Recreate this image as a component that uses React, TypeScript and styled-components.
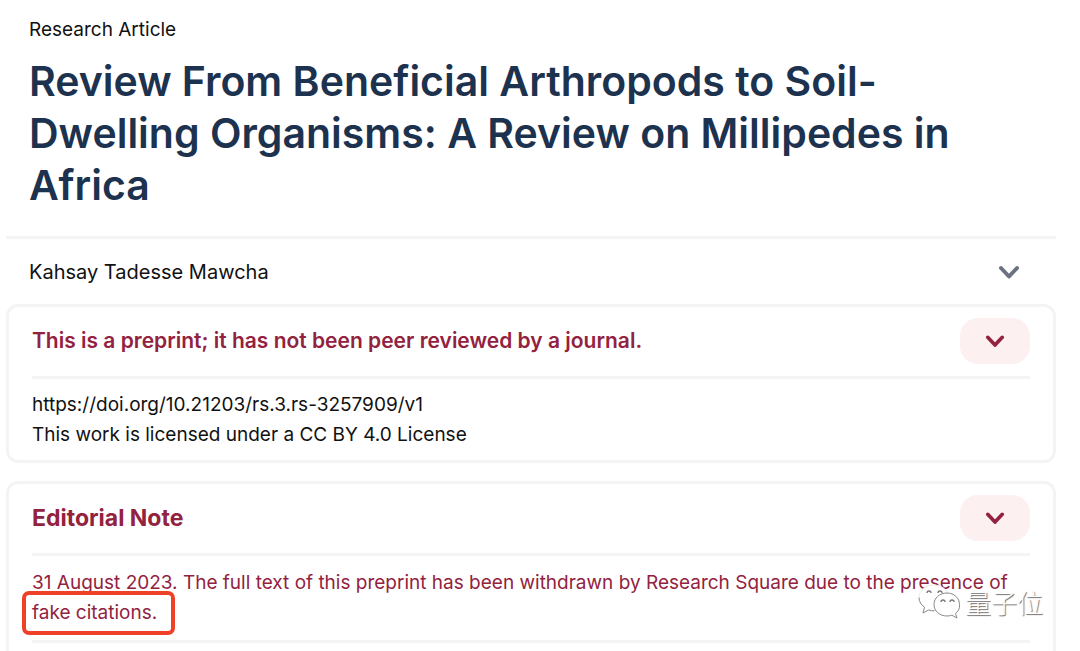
import React from "react";
import styled, { createGlobalStyle } from "styled-components";

const GlobalStyle = createGlobalStyle`
  * { box-sizing: border-box; }
  body {
    margin: 0;
    background: #ffffff;
    color: #111111;
    font-family: Inter, "Noto Sans CJK SC", sans-serif;
    font-size: 19px;
    line-height: 30px;
  }
`;

const Page = styled.main`
  padding: 15px 24px 0 6px;
`;

const ArticleHeader = styled.header`
  padding: 0 23px 25px;
  border-bottom: 3px solid #f3f4f5;
`;

const Kind = styled.p`
  margin: 0 0 10px;
`;

const Title = styled.h1`
  margin: 0;
  max-width: 940px;
  color: #1d324e;
  font-size: 41px;
  font-weight: 560;
  line-height: 52px;
`;

const AuthorRow = styled.div`
  display: flex;
  align-items: center;
  justify-content: space-between;
  height: 65px;
  padding: 0 36px 0 23px;
`;

const Author = styled.span`
  font-size: 20px;
`;

const IconButton = styled.button`
  display: flex;
  align-items: center;
  justify-content: center;
  padding: 0;
  border: 0;
  background: none;
  color: #6c7281;
  cursor: pointer;
`;

const PillButton = styled(IconButton)`
  flex: none;
  width: 70px;
  height: 46px;
  border-radius: 18px;
  background: #fdf0f1;
  color: #93223f;
`;

const Card = styled.section<{ $open?: boolean }>`
  position: relative;
  padding: 11px 23px 10px;
  border: 3px solid #f3f4f5;
  border-radius: 12px;
  & + & { margin-top: 18px; }
  ${(p) => p.$open && "border-bottom: 0; border-radius: 12px 12px 0 0;"}
`;

const CardHeader = styled.div`
  display: flex;
  align-items: center;
  justify-content: space-between;
  padding-bottom: 12px;
  border-bottom: 3px solid #f3f4f5;
`;

const CardTitle = styled.h2<{ $large?: boolean }>`
  margin: 0;
  color: #93223f;
  font-size: ${(p) => (p.$large ? 23 : 21)}px;
  font-weight: ${(p) => (p.$large ? 700 : 600)};
`;

const Details = styled.div`
  padding-top: 11px;
`;

const Line = styled.p`
  margin: 0;
`;

const DoiLink = styled.a`
  color: inherit;
  text-decoration: none;
`;

const Note = styled.p`
  margin: 0;
  padding: 12px 0;
  border-bottom: 3px solid #f3f4f5;
  color: #93223f;
`;

const Marked = styled.span`
  position: relative;
  &::after {
    content: "";
    position: absolute;
    inset: -10px -18px -11px -10px;
    border: 4px solid #ee4128;
    border-radius: 7px;
  }
`;

const Watermark = styled.div`
  position: absolute;
  right: 10px;
  top: 98px;
  display: flex;
  align-items: center;
  gap: 4px;
  color: #ffffff;
  font-family: "Noto Sans CJK SC", sans-serif;
  font-size: 26px;
  font-weight: 300;
  line-height: 40px;
  text-shadow: 1px 1px 1px #6c6c6c;
`;

const Chevron = ({ size }: { size: number }) => (
  <svg width={size} height={size} viewBox="0 0 22 22" fill="none" stroke="currentColor" strokeWidth="4" strokeLinecap="round" strokeLinejoin="round" aria-hidden="true">
    <path d="M3 7l8 8.500L19 7" />
  </svg>
);

const WeChatMark = () => (
  <svg width="44" height="40" viewBox="0 0 44 40" aria-hidden="true">
    <g fill="#ffffff" stroke="#8a8a8a" strokeWidth="1">
      <path d="M17 3C8.500 3 2 8.500 2 15.500c0 4 2.200 7.500 5.500 9.700L6 31l5.500-3c1.700.5 3.500.8 5.500.8 8.500 0 15-5.500 15-12.500S25.500 3 17 3z" stroke="#eeeeee" />
      <path d="M2 15.500c0 4 2.200 7.500 5.500 9.700L6 31l5.500-3c2 .6 4 .8 6 .8" />
      <path d="M30 11c-7.500 0-13 5-13 11.500S22.500 34 30 34c1.700 0 3.300-.3 4.800-.8L40 36l-1.500-4.500c2.800-2 4.500-5.200 4-9C42.500 16 37 11 30 11z" />
    </g>
    <g fill="none" stroke="#777777" strokeWidth="1.300">
      <path d="M10 11a2 2 0 0 1 4 0M21 11a2 2 0 0 1 4 0M24 20a2 2 0 0 1 4 0M33 20a2 2 0 0 1 4 0" />
    </g>
  </svg>
);

export default function App() {
  return (
    <>
      <GlobalStyle />
      <Page>
        <ArticleHeader>
          <Kind>Research Article</Kind>
          <Title>
            Review From Beneficial Arthropods to Soil-Dwelling Organisms: A Review on Millipedes in Africa
          </Title>
        </ArticleHeader>
        <AuthorRow>
          <Author>Kahsay Tadesse Mawcha</Author>
          <IconButton type="button" aria-label="Show author details">
            <Chevron size={22} />
          </IconButton>
        </AuthorRow>
        <Card>
          <CardHeader>
            <CardTitle>This is a preprint; it has not been peer reviewed by a journal.</CardTitle>
            <PillButton type="button" aria-label="Toggle preprint details">
              <Chevron size={20} />
            </PillButton>
          </CardHeader>
          <Details>
            <Line>
              <DoiLink href="https://doi.org/10.21203/rs.3.rs-3257909/v1">
                https://doi.org/10.21203/rs.3.rs-3257909/v1
              </DoiLink>
            </Line>
            <Line>This work is licensed under a CC BY 4.0 License</Line>
          </Details>
        </Card>
        <Card $open>
          <CardHeader>
            <CardTitle $large>Editorial Note</CardTitle>
            <PillButton type="button" aria-label="Toggle editorial note">
              <Chevron size={20} />
            </PillButton>
          </CardHeader>
          <Note>
            31 August 2023. The full text of this preprint has been withdrawn by Research Square due to the presence of{" "}
            <Marked>fake citations.</Marked>
          </Note>
          <Watermark>
            <WeChatMark />
            <span>量子位</span>
          </Watermark>
        </Card>
      </Page>
    </>
  );
}
